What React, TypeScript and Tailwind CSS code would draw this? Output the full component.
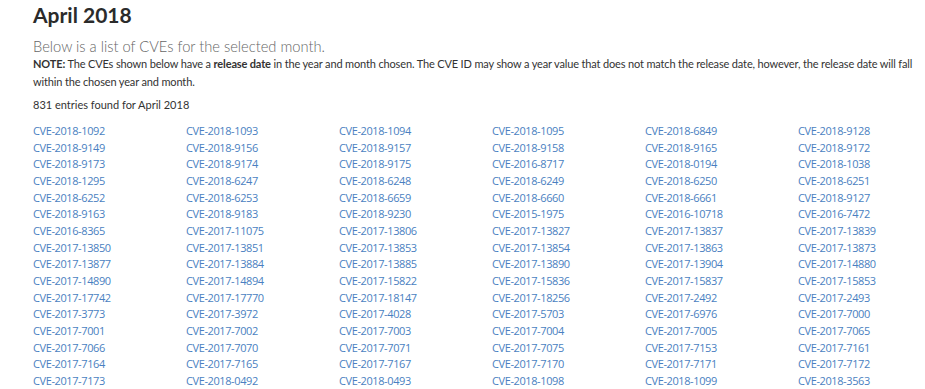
import React from 'react';

const cves: string[] = [
  'CVE-2018-1092', 'CVE-2018-1093', 'CVE-2018-1094', 'CVE-2018-1095', 'CVE-2018-6849', 'CVE-2018-9128',
  'CVE-2018-9149', 'CVE-2018-9156', 'CVE-2018-9157', 'CVE-2018-9158', 'CVE-2018-9165', 'CVE-2018-9172',
  'CVE-2018-9173', 'CVE-2018-9174', 'CVE-2018-9175', 'CVE-2016-8717', 'CVE-2018-0194', 'CVE-2018-1038',
  'CVE-2018-1295', 'CVE-2018-6247', 'CVE-2018-6248', 'CVE-2018-6249', 'CVE-2018-6250', 'CVE-2018-6251',
  'CVE-2018-6252', 'CVE-2018-6253', 'CVE-2018-6659', 'CVE-2018-6660', 'CVE-2018-6661', 'CVE-2018-9127',
  'CVE-2018-9163', 'CVE-2018-9183', 'CVE-2018-9230', 'CVE-2015-1975', 'CVE-2016-10718', 'CVE-2016-7472',
  'CVE-2016-8365', 'CVE-2017-11075', 'CVE-2017-13806', 'CVE-2017-13827', 'CVE-2017-13837', 'CVE-2017-13839',
  'CVE-2017-13850', 'CVE-2017-13851', 'CVE-2017-13853', 'CVE-2017-13854', 'CVE-2017-13863', 'CVE-2017-13873',
  'CVE-2017-13877', 'CVE-2017-13884', 'CVE-2017-13885', 'CVE-2017-13890', 'CVE-2017-13904', 'CVE-2017-14880',
  'CVE-2017-14890', 'CVE-2017-14894', 'CVE-2017-15822', 'CVE-2017-15836', 'CVE-2017-15837', 'CVE-2017-15853',
  'CVE-2017-17742', 'CVE-2017-17770', 'CVE-2017-18147', 'CVE-2017-18256', 'CVE-2017-2492', 'CVE-2017-2493',
  'CVE-2017-3773', 'CVE-2017-3972', 'CVE-2017-4028', 'CVE-2017-5703', 'CVE-2017-6976', 'CVE-2017-7000',
  'CVE-2017-7001', 'CVE-2017-7002', 'CVE-2017-7003', 'CVE-2017-7004', 'CVE-2017-7005', 'CVE-2017-7065',
  'CVE-2017-7066', 'CVE-2017-7070', 'CVE-2017-7071', 'CVE-2017-7075', 'CVE-2017-7153', 'CVE-2017-7161',
  'CVE-2017-7164', 'CVE-2017-7165', 'CVE-2017-7167', 'CVE-2017-7170', 'CVE-2017-7171', 'CVE-2017-7172',
  'CVE-2017-7173', 'CVE-2018-0492', 'CVE-2018-0493', 'CVE-2018-1098', 'CVE-2018-1099', 'CVE-2018-3563',
];

const App = () => {
  return (
    <div className="bg-white min-h-screen overflow-hidden pl-[33px] text-[#333]" style={{ fontFamily: 'Lato, "Open Sans", sans-serif' }}>
      {/* En-tête */}
      <h1 className="text-[21px] font-bold leading-[28px] pt-[1px] text-[#2b2b2b]">April 2018</h1>
      <p className="text-[14.7px] font-light leading-[18px] mt-[8px] text-[#666]">Below is a list of CVEs for the selected month.</p>
      <p className="text-[11px] leading-[18px] w-[888px] tracking-[-0.15px]">
        <b>NOTE:</b> The CVEs shown below have a <b>release date</b> in the year and month chosen. The CVE ID may show a year value that does not match the release date, however, the release date will fall within the chosen year and month.
      </p>
      <p className="text-[11px] leading-[16px] mt-[6px]">831 entries found for April 2018</p>

      {/* Grille des CVE */}
      <div className="grid grid-cols-[repeat(6,153px)] mt-[10px]">
        {cves.map((id) => (
          <a key={id} href="#" className="text-[11px] leading-[16.67px] tracking-[-0.4px] text-[#4a7fc1] whitespace-nowrap" style={{ fontFamily: '"Open Sans", sans-serif' }}>
            {id}
          </a>
        ))}
      </div>
    </div>
  );
};

export default App;
